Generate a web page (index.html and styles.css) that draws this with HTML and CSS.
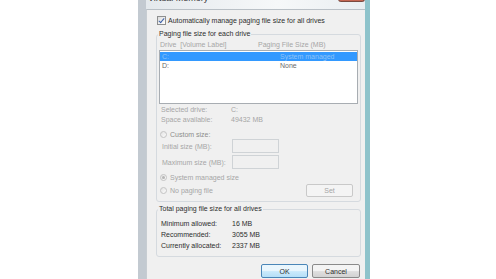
FILE: index.html
```html
<!DOCTYPE html>
<html lang="en">

<head>
    <meta charset="UTF-8">
    <meta name="viewport" content="width=device-width, initial-scale=1.0">
    <title>Virtual Memory</title>
    <link rel="stylesheet" href="styles.css">
</head>

<body>
    <div class="window">
        <div class="titlebar">
            <span class="title">Virtual Memory</span>
            <span class="close-btn"></span>
        </div>
        <div class="client">
            <label class="check-row">
                <span class="checkbox checked"></span>
                <span>Automatically manage paging file size for all drives</span>
            </label>

            <fieldset class="group drives">
                <legend>Paging file size for each drive</legend>
                <div class="list-header disabled">
                    <span class="col-drive">Drive&nbsp; [Volume Label]</span>
                    <span class="col-size">Paging File Size (MB)</span>
                </div>
                <div class="listbox">
                    <div class="list-row selected">
                        <span class="col-drive">C:</span>
                        <span class="col-value">System managed</span>
                    </div>
                    <div class="list-row">
                        <span class="col-drive">D:</span>
                        <span class="col-value">None</span>
                    </div>
                </div>

                <div class="info-row first disabled">
                    <span class="info-label">Selected drive:</span>
                    <span>C:</span>
                </div>
                <div class="info-row disabled">
                    <span class="info-label">Space available:</span>
                    <span>49432 MB</span>
                </div>

                <div class="radio-row custom">
                    <span class="radio"></span>
                    <span>Custom size:</span>
                </div>
                <div class="size-row disabled">
                    <span class="size-label">Initial size (MB):</span>
                    <span class="textbox"></span>
                </div>
                <div class="size-row second disabled">
                    <span class="size-label">Maximum size (MB):</span>
                    <span class="textbox"></span>
                </div>

                <div class="radio-row system disabled">
                    <span class="radio checked"></span>
                    <span>System managed size</span>
                </div>
                <div class="radio-row nopaging disabled">
                    <span class="radio"></span>
                    <span class="grow">No paging file</span>
                    <span class="btn btn-disabled">Set</span>
                </div>
            </fieldset>

            <fieldset class="group totals">
                <legend>Total paging file size for all drives</legend>
                <div class="total-row">
                    <span class="total-label">Minimum allowed:</span>
                    <span>16 MB</span>
                </div>
                <div class="total-row">
                    <span class="total-label">Recommended:</span>
                    <span>3055 MB</span>
                </div>
                <div class="total-row">
                    <span class="total-label">Currently allocated:</span>
                    <span>2337 MB</span>
                </div>
            </fieldset>

            <div class="buttons">
                <span class="btn btn-default">OK</span>
                <span class="btn">Cancel</span>
            </div>
        </div>
    </div>
</body>

</html>
```

FILE: styles.css
```css
:root {
    --dialog-bg: #f0f0f0;
    --text-color: #2e2e2e;
    --disabled-text: #a6a6a6;
    --group-border: #d5dadf;
    --select-bg: #3399ff;
}

body {
    margin: 0;
    background-color: #ffffff;
    font-family: 'Liberation Sans', Arial, sans-serif;
    font-size: 7px;
    color: var(--text-color);
    overflow: hidden;
}

.window {
    margin-left: 138px;
    margin-top: -20px;
    width: 219px;
    border-left: 8px solid #c3cad1;
    border-right: 5px solid #8ec3cb;
    background: linear-gradient(to bottom, #e9eef2, #dfe6eb);
    box-shadow: inset 1px 0 0 #9aa3ab;
}

.titlebar {
    height: 29px;
    display: flex;
    align-items: flex-end;
    justify-content: space-between;
    background: linear-gradient(to right, #e4e9ed, #f6f8f9 60%, #e9eef1);
}

.title {
    font-family: 'Liberation Sans', Arial, sans-serif;
    font-size: 9px;
    line-height: 9px;
    color: #3a3a3a;
    padding-left: 2px;
    padding-bottom: 6px;
}

.close-btn {
    align-self: flex-start;
    margin-top: 6px;
    width: 27px;
    height: 16px;
    border: 1px solid #7a4a40;
    border-top: none;
    border-radius: 0 0 3px 3px;
    background: linear-gradient(to bottom, #e09a88, #c36450);
    box-sizing: border-box;
}

.client {
    background-color: var(--dialog-bg);
    border-top: 1px solid #b9c0c6;
    border-left: 1px solid #c7cdd2;
    padding: 5px 4px 4px 9px;
    min-height: 290px;
    display: flex;
    flex-direction: column;
}

.check-row {
    display: flex;
    align-items: center;
    height: 10px;
    padding-left: 1px;
    gap: 2px;
}

.checkbox {
    width: 9px;
    height: 9px;
    border: 1px solid #8e8f8f;
    background: linear-gradient(135deg, #dcdcdc, #ffffff);
    box-sizing: border-box;
    position: relative;
}

.checkbox.checked::after {
    content: "";
    position: absolute;
    left: 2px;
    top: 0px;
    width: 2px;
    height: 5px;
    border: solid #3a5fa8;
    border-width: 0 1.5px 1.5px 0;
    transform: rotate(40deg);
}

.group {
    margin: 0;
    padding: 0;
    border: 1px solid var(--group-border);
    border-radius: 3px;
    min-width: 0;
}

.group legend {
    margin-left: 1px;
    padding: 0 1px;
    height: 10px;
    line-height: 10px;
    color: var(--text-color);
}

.drives {
    margin-top: 4px;
    padding-bottom: 4px;
}

.disabled {
    color: var(--disabled-text);
}

.list-header {
    display: flex;
    height: 10px;
    line-height: 10px;
    margin-top: 1px;
    padding-left: 3px;
}

.list-header .col-drive {
    width: 98px;
}

.listbox {
    margin: 0 2px;
    height: 54px;
    border: 1px solid #a8adb2;
    background-color: #ffffff;
    box-sizing: border-box;
    padding-top: 1px;
}

.list-row {
    display: flex;
    height: 9px;
    line-height: 9px;
    color: #6a6a6a;
}

.list-row .col-drive {
    width: 118px;
    padding-left: 2px;
}

.list-row.selected {
    background-color: var(--select-bg);
    color: #8fc3f7;
}

.info-row {
    display: flex;
    height: 10px;
    line-height: 10px;
    padding-left: 4px;
}

.info-row.first {
    margin-top: 1px;
}

.info-label {
    width: 70px;
}

.radio-row {
    display: flex;
    align-items: center;
    padding-left: 3px;
    gap: 3px;
}

.radio-row.custom {
    height: 9px;
    margin-top: 5px;
    color: #8c8c8c;
}

.radio-row.system {
    height: 10px;
    margin-top: 3px;
}

.radio-row.nopaging {
    height: 13px;
    margin-top: 2px;
    padding-right: 7px;
}

.radio {
    width: 7px;
    height: 7px;
    border-radius: 50%;
    border: 1px solid #c3c3c3;
    background: linear-gradient(135deg, #e4e4e4, #fafafa);
    box-sizing: border-box;
    position: relative;
}

.radio.checked::after {
    content: "";
    position: absolute;
    left: 1px;
    top: 1px;
    width: 3px;
    height: 3px;
    border-radius: 50%;
    background-color: #b5b5b5;
}

.grow {
    flex: 1;
}

.size-row {
    display: flex;
    align-items: center;
    height: 14px;
    padding-left: 5px;
}

.size-row.second {
    margin-top: 2px;
}

.size-label {
    width: 70px;
}

.textbox {
    width: 47px;
    height: 14px;
    border: 1px solid #cfd3d6;
    background-color: var(--dialog-bg);
    box-sizing: border-box;
}

.btn {
    display: flex;
    align-items: center;
    justify-content: center;
    width: 48px;
    height: 14px;
    border: 1px solid #8a8a8a;
    border-radius: 2px;
    background: linear-gradient(to bottom, #f4f4f4 45%, #dedede 55%, #d2d2d2);
    box-sizing: border-box;
    color: var(--text-color);
}

.btn-disabled {
    width: 47px;
    height: 13px;
    border-color: #c9c9c9;
    background: #f4f4f4;
    color: var(--disabled-text);
}

.btn-default {
    width: 47px;
    border-color: #4a86b8;
    background: linear-gradient(to bottom, #eaf6fd 45%, #c9e9fb 55%, #b6dff7);
}

.totals {
    margin-top: 2px;
    padding-top: 4px;
    padding-bottom: 5px;
}

.total-row {
    display: flex;
    height: 11px;
    line-height: 11px;
    padding-left: 4px;
}

.total-label {
    width: 71px;
}

.buttons {
    display: flex;
    justify-content: flex-end;
    gap: 4px;
    margin-top: 7px;
    margin-right: 1px;
}
```
